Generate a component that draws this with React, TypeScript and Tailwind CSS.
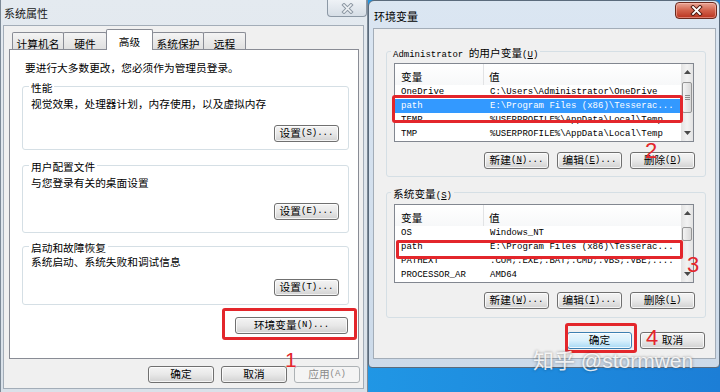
import React from "react";

function T({ t, u = false }: { t: string; u?: boolean }) {
  const runs: { a: boolean; s: string }[] = [];
  for (const ch of Array.from(t)) {
    const a = ch.charCodeAt(0) < 0x2000;
    const last = runs[runs.length - 1];
    if (last && last.a === a) last.s += ch;
    else runs.push({ a, s: ch });
  }
  return (
    <>
      {runs.map((r, i) => {
        if (!r.a)
          return (
            <span key={i} className="font-['Noto_Sans_CJK_SC',sans-serif] text-[10.7px]">
              {r.s}
            </span>
          );
        const idx = r.s.indexOf("&");
        if (idx >= 0) {
          return (
            <span key={i} className="font-['Liberation_Mono',monospace] text-[9px]">
              {r.s.slice(0, idx)}
              <span className={u ? "underline underline-offset-1" : ""}>{r.s[idx + 1]}</span>
              {r.s.slice(idx + 2)}
            </span>
          );
        }
        return (
          <span key={i} className="font-['Liberation_Mono',monospace] text-[9px]">
            {r.s}
          </span>
        );
      })}
    </>
  );
}

type BtnKind = "normal" | "disabled" | "focus";
function Btn({ label, w, kind = "normal", u = false }: { label: string; w: string; kind?: BtnKind; u?: boolean }) {
  const base = "h-[17px] rounded-[3px] border flex items-center justify-center leading-none whitespace-nowrap";
  const k =
    kind === "disabled"
      ? "border-[#adb2b5] bg-[#f4f4f4] text-[#8a8a8a]"
      : kind === "focus"
      ? "border-[#3c7fb1] bg-linear-to-b from-[#eaf6fd] via-[#d9f0fc] to-[#a7d9f5] text-black shadow-[inset_0_0_0_1px_rgba(255,255,255,0.8)]"
      : "border-[#707070] bg-linear-to-b from-[#f4f4f4] via-[#e8e8e8] to-[#d2d2d2] text-black shadow-[inset_0_0_0_1px_rgba(255,255,255,0.75)]";
  return (
    <div className={`${base} ${k} ${w}`}>
      <T t={label} u={u} />
    </div>
  );
}

function CloseInactive() {
  return (
    <div className="w-[40px] h-[17px] rounded-b-[4px] border border-t-0 border-[#8c98a5] bg-linear-to-b from-[#eef2f6] to-[#d6dee6] flex items-center justify-center">
      <svg width="13" height="11" viewBox="0 0 13 11">
        <path d="M3 2 L10 9 M10 2 L3 9" stroke="#8d98a4" strokeWidth="3.6" strokeLinecap="square" />
        <path d="M3 2 L10 9 M10 2 L3 9" stroke="#eef2f5" strokeWidth="1.6" strokeLinecap="square" />
      </svg>
    </div>
  );
}

function CloseActive() {
  return (
    <div className="mt-[1px] w-[42px] h-[17px] rounded-[4px] border border-[#6b2a1e] bg-linear-to-b from-[#e8a595] via-[#d1604a] to-[#b9311c] flex items-center justify-center shadow-[inset_0_0_0_1px_rgba(255,200,190,0.5)]">
      <svg width="13" height="11" viewBox="0 0 13 11">
        <path d="M3 2 L10 9 M10 2 L3 9" stroke="#4f1a10" strokeWidth="3.8" strokeLinecap="square" />
        <path d="M3 2 L10 9 M10 2 L3 9" stroke="#ffffff" strokeWidth="1.8" strokeLinecap="square" />
      </svg>
    </div>
  );
}

function Tab({ label, w, sel = false, first = false }: { label: string; w: string; sel?: boolean; first?: boolean }) {
  if (sel)
    return (
      <div className={`${w} -ml-px h-[21px] mb-[-1px] relative z-10 bg-white border border-b-0 border-[#898c95] rounded-t-[2px] flex justify-center pt-[3px]`}>
        <div className="h-[14px] leading-[14px] text-black">
          <T t={label} />
        </div>
      </div>
    );
  return (
    <div
      className={`${w} ${first ? "" : "-ml-px"} h-[17px] border border-b-0 border-[#898c95] rounded-t-[2px] bg-linear-to-b from-[#f4f4f4] to-[#e0e0e0] flex justify-center pt-[2px]`}
    >
      <div className="h-[14px] leading-[14px] text-black">
        <T t={label} />
      </div>
    </div>
  );
}

function Line({ t, cls = "" }: { t: string; cls?: string }) {
  return (
    <div className={`h-[14px] leading-[14px] text-black whitespace-nowrap ${cls}`}>
      <T t={t} />
    </div>
  );
}

function Legend({ t, u = false, cls = "" }: { t: string; u?: boolean; cls?: string }) {
  return (
    <legend className={`h-[14px] leading-[14px] px-[2px] text-black whitespace-nowrap ${cls}`}>
      <T t={t} u={u} />
    </legend>
  );
}

function LeftDialog() {
  return (
    <div className="w-[368px] h-[392px] shrink-0 flex flex-col border-x border-[#7d8a97] bg-linear-to-b from-[#e4eaf0] to-[#d9e1e9]">
      <div className="h-[25px] flex justify-between items-start pl-[3px]">
        <div className="mt-[5px] h-[14px] leading-[14px] text-[#1a1a1a]">
          <span className="font-['Noto_Sans_CJK_SC',sans-serif] text-[11px]">系统属性</span>
        </div>
        <CloseInactive />
      </div>
      <div className="flex-1 ml-[2px] mr-[3px] mb-[3px] bg-[#f0f0f0] border border-[#a3adb8] flex flex-col pt-[3px]">
        <div className="flex items-end h-[20px] ml-[8px]">
          <Tab label="计算机名" w="w-[52px]" first />
          <Tab label="硬件" w="w-[44px]" />
          <Tab label="高级" w="w-[47px]" sel />
          <Tab label="系统保护" w="w-[52px]" />
          <Tab label="远程" w="w-[43px]" />
        </div>
        <div className="ml-[5px] w-[350px] h-[310px] bg-white border border-[#898c95] flex flex-col">
          <Line t="要进行大多数更改，您必须作为管理员登录。" cls="mt-[9px] ml-[15px]" />
          <fieldset className="ml-[12px] w-[327px] mt-[6px] border border-[#d5dfe5] rounded-[3px] pl-[8px] pr-[9px] pb-[7px] min-w-0">
            <Legend t="性能" cls="-ml-[2px]" />
            <Line t="视觉效果，处理器计划，内存使用，以及虚拟内存" cls="mt-[2px]" />
            <div className="flex justify-end mt-[16px]">
              <Btn label="设置(&S)..." w="w-[65px]" />
            </div>
          </fieldset>
          <fieldset className="ml-[12px] w-[327px] mt-[8px] border border-[#d5dfe5] rounded-[3px] pl-[8px] pr-[9px] pb-[12px] min-w-0">
            <Legend t="用户配置文件" cls="-ml-[2px]" />
            <Line t="与您登录有关的桌面设置" cls="mt-[2px]" />
            <div className="flex justify-end mt-[15px]">
              <Btn label="设置(&E)..." w="w-[65px]" />
            </div>
          </fieldset>
          <fieldset className="ml-[12px] w-[327px] mt-[6px] border border-[#d5dfe5] rounded-[3px] pl-[8px] pr-[9px] pb-[8px] min-w-0">
            <Legend t="启动和故障恢复" cls="-ml-[2px]" />
            <Line t="系统启动、系统失败和调试信息" cls="mt-0" />
            <div className="flex justify-end mt-[12px]">
              <Btn label="设置(&T)..." w="w-[65px]" />
            </div>
          </fieldset>
          <div className="flex justify-end mt-[12px] mr-[10px]">
            <Btn label="环境变量(&N)..." w="w-[113px]" />
          </div>
        </div>
        <div className="flex justify-end gap-[7px] mt-[7px] mr-[3px]">
          <Btn label="确定" w="w-[66px]" />
          <Btn label="取消" w="w-[66px]" />
          <Btn label="应用(&A)" w="w-[66px]" kind="disabled" />
        </div>
      </div>
    </div>
  );
}

function Arrow({ down = false }: { down?: boolean }) {
  return (
    <svg width="7" height="4" viewBox="0 0 7 4">
      {down ? <polygon points="0,0 7,0 3.5,4" fill="#4a4a4a" /> : <polygon points="0,4 7,4 3.5,0" fill="#4a4a4a" />}
    </svg>
  );
}

function Scrollbar({ mt, h, grip }: { mt: string; h: string; grip: boolean }) {
  return (
    <div className="w-[12px] shrink-0 flex flex-col bg-linear-to-r from-[#e3e3e3] via-[#f2f2f2] to-[#e3e3e3]">
      <div className="h-[16px] flex items-center justify-center">
        <Arrow />
      </div>
      <div className="flex-1 flex flex-col">
        <div className={`${mt} ${h} mx-[1px] rounded-[2px] border border-[#959595] bg-linear-to-r from-[#f4f4f4] to-[#d9d9d9] flex flex-col items-center justify-center gap-[1px]`}>
          {grip && (
            <>
              <div className="w-[5px] h-px bg-[#8a8a8a]" />
              <div className="w-[5px] h-px bg-[#8a8a8a]" />
              <div className="w-[5px] h-px bg-[#8a8a8a]" />
            </>
          )}
        </div>
      </div>
      <div className="h-[16px] flex items-center justify-center">
        <Arrow down />
      </div>
    </div>
  );
}

function VarList({ rows, sel, mt, h, grip }: { rows: [string, string][]; sel: number; mt: string; h: string; grip: boolean }) {
  return (
    <div className="h-[79px] mr-[1px] border border-[#828790] bg-white flex">
      <div className="flex-1 min-w-0 flex flex-col">
        <div className="h-[21px] flex bg-linear-to-b from-white to-[#f7f8f9]">
          <div className="w-[89px] pl-[6px] border-r border-[#e2e3e5] flex items-center">
            <Line t="变量" />
          </div>
          <div className="flex-1 pl-[5px] flex items-center">
            <Line t="值" />
          </div>
        </div>
        {rows.map(([n, v], i) => (
          <div
            key={i}
            className={`h-[14px] leading-[14px] flex whitespace-nowrap ${i === sel ? "bg-[#3399ff] text-white" : "text-black"}`}
          >
            <div className="w-[90px] pl-[6px] font-['Liberation_Mono',monospace] text-[9px] overflow-hidden">{n}</div>
            <div className="flex-1 pl-[5px] font-['Liberation_Mono',monospace] text-[9px] overflow-hidden">{v}</div>
          </div>
        ))}
      </div>
      <Scrollbar mt={mt} h={h} grip={grip} />
    </div>
  );
}

function RightDialog() {
  return (
    <div className="w-[352px] shrink-0 flex flex-col border border-[#5b6b7c] rounded-t-[6px] rounded-b-[4px] bg-linear-to-b from-[#dbe6f2] to-[#ccdae9] pb-[8px]">
      <div className="h-[27px] flex justify-between items-start pl-[5px] pr-[2px]">
        <div className="mt-[7px] h-[14px] leading-[14px] text-black">
          <span className="font-['Noto_Sans_CJK_SC',sans-serif] text-[11px]">环境变量</span>
        </div>
        <CloseActive />
      </div>
      <div className="ml-[4px] mr-[3px] bg-[#f0f0f0] border border-[#a3adb8] flex flex-col pt-[15px] pb-[9px]">
        <fieldset className="ml-[12px] w-[320px] border border-[#d5dfe5] rounded-[3px] pl-[7px] pr-[10px] pb-[7px] min-w-0">
          <Legend t="Administrator 的用户变量(&U)" u cls="-ml-[3px]" />
          <div className="mt-[5px]">
            <VarList
              rows={[
                ["OneDrive", "C:\\Users\\Administrator\\OneDrive"],
                ["path", "E:\\Program Files (x86)\\Tesserac..."],
                ["TEMP", "%USERPROFILE%\\AppData\\Local\\Temp"],
                ["TMP", "%USERPROFILE%\\AppData\\Local\\Temp"],
              ]}
              sel={1}
              mt="mt-[2px]"
              h="h-[31px]"
              grip
            />
          </div>
          <div className="flex justify-end gap-[8px] mt-[10px]">
            <Btn label="新建(&N)..." w="w-[65px]" u />
            <Btn label="编辑(&E)..." w="w-[65px]" u />
            <Btn label="删除(&D)" w="w-[65px]" u />
          </div>
        </fieldset>
        <fieldset className="ml-[12px] w-[320px] mt-[8px] border border-[#d5dfe5] rounded-[3px] pl-[7px] pr-[10px] pb-[8px] min-w-0">
          <Legend t="系统变量(&S)" u cls="-ml-[3px]" />
          <div className="mt-[5px]">
            <VarList
              rows={[
                ["OS", "Windows_NT"],
                ["path", "E:\\Program Files (x86)\\Tesserac..."],
                ["PATHEXT", ".COM;.EXE;.BAT;.CMD;.VBS;.VBE;...."],
                ["PROCESSOR_AR", "AMD64"],
              ]}
              sel={-1}
              mt="mt-[6px]"
              h="h-[14px]"
              grip={false}
            />
          </div>
          <div className="flex justify-end gap-[8px] mt-[9px]">
            <Btn label="新建(&W)..." w="w-[65px]" u />
            <Btn label="编辑(&I)..." w="w-[65px]" u />
            <Btn label="删除(&L)" w="w-[65px]" u />
          </div>
        </fieldset>
        <div className="flex justify-end gap-[8px] mt-[14px] mr-[10px]">
          <Btn label="确定" w="w-[65px]" kind="focus" />
          <Btn label="取消" w="w-[65px]" />
        </div>
      </div>
    </div>
  );
}

export default function App() {
  return (
    <div className="relative w-[720px] h-[392px] overflow-hidden flex items-start bg-linear-to-r from-[#27b0f4] to-[#1c7ed6]">
      <LeftDialog />
      <RightDialog />

      <div className="absolute left-[222px] top-[308px] w-[135px] h-[32px] border-[3px] border-[#e3262b] rounded-[3px]" />
      <div className="absolute left-[392px] top-[95px] w-[291px] h-[28px] border-[3px] border-[#e3262b] rounded-[3px]" />
      <div className="absolute left-[396px] top-[240px] w-[287px] h-[19px] border-[3px] border-[#e3262b] rounded-[2px]" />
      <div className="absolute left-[565px] top-[323px] w-[72px] h-[30px] border-[3px] border-[#e3262b] rounded-[3px]" />

      <div className="absolute left-[285px] top-[349px] font-['Liberation_Sans',sans-serif] text-[21px] leading-none text-[#e3262b]">1</div>
      <div className="absolute left-[645px] top-[140px] font-['Liberation_Sans',sans-serif] text-[22px] leading-none text-[#e3262b]">2</div>
      <div className="absolute left-[687px] top-[254px] font-['Liberation_Sans',sans-serif] text-[22px] leading-none text-[#e3262b]">3</div>
      <div className="absolute left-[646px] top-[327px] font-['Liberation_Sans',sans-serif] text-[22px] leading-none text-[#e3262b]">4</div>

      <div className="absolute left-[533px] top-[350px] font-['Liberation_Sans','Noto_Sans_CJK_SC',sans-serif] text-[21px] leading-none text-white/85 whitespace-nowrap [text-shadow:0_0_3px_rgba(0,0,0,0.45)]">
        知乎 @stormwen
      </div>
    </div>
  );
}
